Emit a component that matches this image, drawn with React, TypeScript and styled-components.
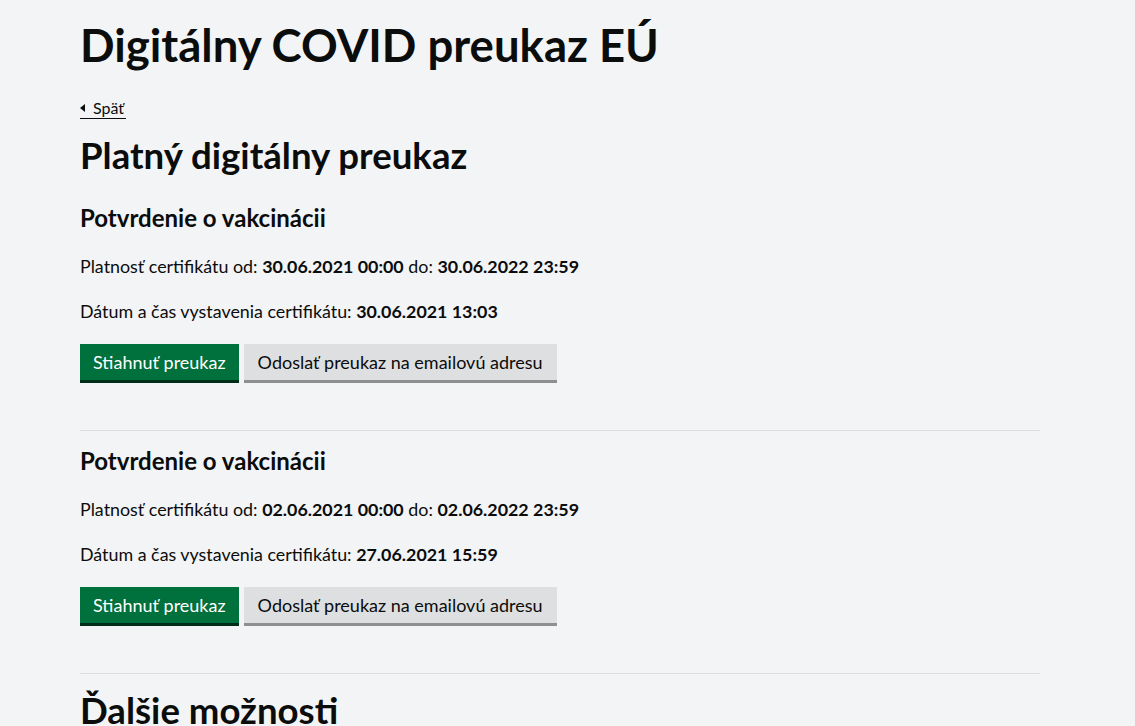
import React from "react";
import styled, { createGlobalStyle } from "styled-components";

const GlobalStyle = createGlobalStyle`
  html, body {
    margin: 0;
    padding: 0;
    background: #f3f4f6;
    color: #0b0c0c;
    font-family: Lato, "Liberation Sans", sans-serif;
  }
`;

const Page = styled.main`
  width: 960px;
  padding: 18px 0 0 80px;
`;

const Title = styled.h1`
  font-size: 45.5px;
  line-height: 54px;
  font-weight: 700;
  margin: 0 0 27px;
`;

const Nav = styled.nav`
  display: flex;
`;

const BackLink = styled.a`
  display: flex;
  align-items: center;
  gap: 8px;
  font-size: 16px;
  line-height: 18px;
  color: #0b0c0c;
  text-decoration: none;
  border-bottom: 1px solid #0b0c0c;
  padding-bottom: 1px;
  padding-right: 2px;
  cursor: pointer;
`;

const Arrow = styled.span`
  width: 0;
  height: 0;
  border-top: 4px solid transparent;
  border-bottom: 4px solid transparent;
  border-right: 5px solid #0b0c0c;
`;

const SectionTitle = styled.h2`
  font-size: 36.6px;
  line-height: 40px;
  font-weight: 700;
  margin: 16px 0 28px;
`;

const Certificate = styled.section`
  padding-bottom: 50px;
  margin-bottom: 15px;
  border-bottom: 1px solid #dcdde0;
`;

const CertTitle = styled.h3`
  font-size: 24px;
  line-height: 30px;
  font-weight: 700;
  margin: 0 0 20px;
`;

const Info = styled.p`
  font-size: 17.85px;
  line-height: 26px;
  margin: 0 0 19px;

  b {
    font-weight: 700;
  }
`;

const Actions = styled.div`
  display: flex;
  gap: 5px;
  margin-top: 20px;
`;

const Button = styled.button<{ $primary?: boolean }>`
  font-family: inherit;
  font-size: 18px;
  line-height: 22px;
  height: 36px;
  padding: 0 ${(p) => (p.$primary ? "13px" : "14px")};
  border: 0;
  border-radius: 0;
  cursor: pointer;
  color: ${(p) => (p.$primary ? "#ffffff" : "#0b0c0c")};
  background: ${(p) => (p.$primary ? "#00703c" : "#dedfe0")};
  box-shadow: 0 3px 0 ${(p) => (p.$primary ? "#002d18" : "#8e8f91")};
`;

const certificates = [
  {
    from: "30.06.2021 00:00",
    to: "30.06.2022 23:59",
    issued: "30.06.2021 13:03",
  },
  {
    from: "02.06.2021 00:00",
    to: "02.06.2022 23:59",
    issued: "27.06.2021 15:59",
  },
];

export default function App() {
  return (
    <>
      <GlobalStyle />
      <Page>
        <Title>Digitálny COVID preukaz EÚ</Title>
        <Nav>
          <BackLink>
            <Arrow />
            Späť
          </BackLink>
        </Nav>
        <SectionTitle>Platný digitálny preukaz</SectionTitle>
        {certificates.map((c, i) => (
          <Certificate key={i}>
            <CertTitle>Potvrdenie o vakcinácii</CertTitle>
            <Info>
              Platnosť certifikátu od: <b>{c.from}</b> do: <b>{c.to}</b>
            </Info>
            <Info>
              Dátum a čas vystavenia certifikátu: <b>{c.issued}</b>
            </Info>
            <Actions>
              <Button $primary>Stiahnuť preukaz</Button>
              <Button>Odoslať preukaz na emailovú adresu</Button>
            </Actions>
          </Certificate>
        ))}
        <SectionTitle>Ďalšie možnosti</SectionTitle>
      </Page>
    </>
  );
}
